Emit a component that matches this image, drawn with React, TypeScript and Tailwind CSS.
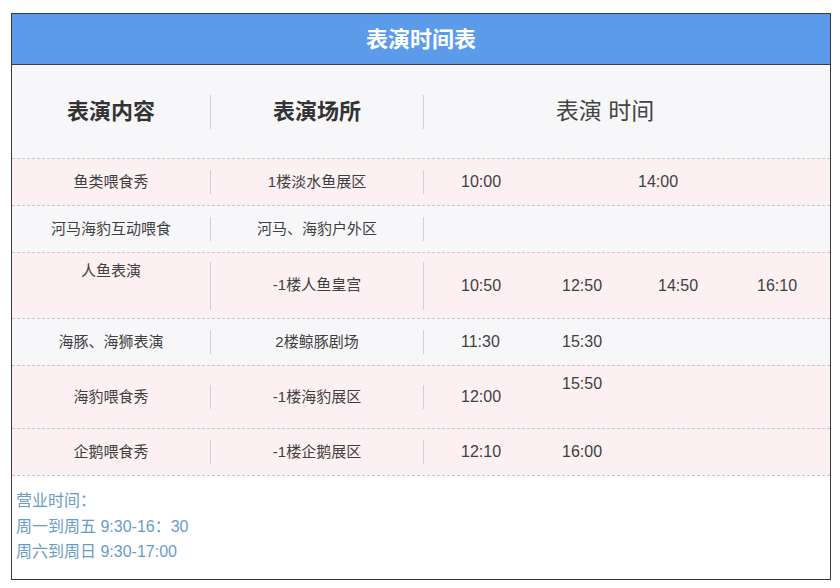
import React from "react";

const font = { fontFamily: '"Liberation Sans", "Noto Sans CJK SC", sans-serif' };

type Row = {
  name: string;
  place: string;
  bg: string;
  h: string;
  divH: string;
  nameCls?: string;
  times: { t: string; cls?: string }[];
  grid: string;
};

const rows: Row[] = [
  {
    name: "鱼类喂食秀",
    place: "1楼淡水鱼展区",
    bg: "bg-[#fdf0f3]",
    h: "h-[47px]",
    divH: "h-[24px]",
    times: [{ t: "10:00" }, { t: "14:00" }],
    grid: "grid-cols-[177px_1fr]",
  },
  {
    name: "河马海豹互动喂食",
    place: "河马、海豹户外区",
    bg: "bg-[#f7f7f9]",
    h: "h-[47px]",
    divH: "h-[24px]",
    times: [],
    grid: "grid-cols-[101px_96px_99px_1fr]",
  },
  {
    name: "人鱼表演",
    place: "-1楼人鱼皇宫",
    bg: "bg-[#fdf0f3]",
    h: "h-[66px]",
    divH: "h-[48px]",
    nameCls: "-translate-y-[14px]",
    times: [{ t: "10:50" }, { t: "12:50" }, { t: "14:50" }, { t: "16:10" }],
    grid: "grid-cols-[101px_96px_99px_1fr]",
  },
  {
    name: "海豚、海狮表演",
    place: "2楼鲸豚剧场",
    bg: "bg-[#f7f7f9]",
    h: "h-[47px]",
    divH: "h-[24px]",
    times: [{ t: "11:30" }, { t: "15:30" }],
    grid: "grid-cols-[101px_96px_99px_1fr]",
  },
  {
    name: "海豹喂食秀",
    place: "-1楼海豹展区",
    bg: "bg-[#fdf0f3]",
    h: "h-[63px]",
    divH: "h-[24px]",
    times: [{ t: "12:00" }, { t: "15:50", cls: "-translate-y-[13px]" }],
    grid: "grid-cols-[101px_96px_99px_1fr]",
  },
  {
    name: "企鹅喂食秀",
    place: "-1楼企鹅展区",
    bg: "bg-[#fdf0f3]",
    h: "h-[47px]",
    divH: "h-[24px]",
    times: [{ t: "12:10" }, { t: "16:00" }],
    grid: "grid-cols-[101px_96px_99px_1fr]",
  },
];

function Divider({ h }: { h: string }) {
  return <div className={`w-px ${h} bg-[#d2d0d4]`} />;
}

export default function App() {
  return (
    <div className="w-[840px] h-[588px] bg-white pt-[13px] pl-[11px]" style={font}>
      <div className="w-[820px] border border-[#3b3b3b] bg-white">
        <div className="h-[51px] bg-[#5c9bea] border-b border-[#3b3b3b] flex items-center justify-center">
          <span className="text-white text-[22px] font-bold">表演时间表</span>
        </div>

        <div className="h-[93px] bg-[#f7f6f9] flex items-center text-[#333]">
          <div className="w-[198px] text-center text-[22px] font-bold">表演内容</div>
          <Divider h="h-[34px]" />
          <div className="w-[212px] text-center text-[22px] font-bold">表演场所</div>
          <Divider h="h-[34px]" />
          <div className="w-[362px] text-center text-[23px] text-[#444]">表演 时间</div>
        </div>

        {rows.map((r, i) => (
          <div
            key={i}
            className={`${r.h} ${r.bg} border-t border-dashed border-[#c9c7cb] flex items-center text-[15px] text-[#3f3f3f]`}
          >
            <div className={`w-[198px] text-center ${r.nameCls ?? ""}`}>{r.name}</div>
            <Divider h={r.divH} />
            <div className="w-[212px] text-center">{r.place}</div>
            <Divider h={r.divH} />
            <div className={`flex-1 grid ${r.grid} pl-[37px] text-[16px]`}>
              {r.times.map((t, j) => (
                <span key={j} className={t.cls ?? ""}>
                  {t.t}
                </span>
              ))}
            </div>
          </div>
        ))}

        <div className="border-t border-dashed border-[#c9c7cb] pt-[12px] pb-[14px] pl-[4px] text-[16px] leading-[25.5px] text-[#6a9bc8]">
          <div>营业时间：</div>
          <div>周一到周五 9:30-16：30</div>
          <div>周六到周日 9:30-17:00</div>
        </div>
      </div>
    </div>
  );
}
